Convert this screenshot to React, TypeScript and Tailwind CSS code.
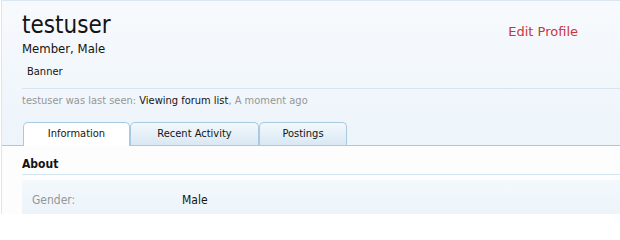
import React from "react";

export default function App() {
  const font = { fontFamily: '"DejaVu Sans Condensed", "DejaVu Sans", Tahoma, sans-serif' };
  return (
    <div className="w-[620px] h-[231px] bg-white overflow-hidden" style={font}>
      <div className="h-[214px] ml-[1px] border-l border-t border-[#dbe6f0] flex flex-col">
        {/* header */}
        <div className="bg-gradient-to-b from-[#f7fafd] to-[#edf4fa] flex flex-col pt-[10px]">
          <div className="flex pl-[20px] pr-[42px]">
            <div className="flex-1 flex flex-col">
              <div className="text-[24px] leading-[28px] text-[#141414]">testuser</div>
              <div className="text-[13px] leading-[16px] mt-[2px] text-[#141414]">Member, Male</div>
              <div className="text-[11px] leading-[14px] mt-[8px] ml-[5px] text-[#141414]">Banner</div>
            </div>
            <div className="text-[13px] leading-[16px] text-[#c8363a] mt-[13px] font-['DejaVu_Sans',sans-serif]">Edit Profile</div>
          </div>
          <div className="ml-[20px] mt-[9px] border-t border-[#d7e4ef]" />
          <div className="pl-[20px] pt-[5px] text-[11px] leading-[14px] text-[#969696]">
            testuser was last seen: <span className="text-[#141414]">Viewing forum list</span>, A moment ago
          </div>
          <div className="flex items-end pl-[21px] mt-[14px] border-b border-[#a9c9e0] h-[24px]">
            <div className="w-[107px] h-[24px] -mb-px rounded-t-[5px] border border-b-0 border-[#a9c9e0] bg-white flex items-center justify-center text-[11px] text-[#141414]">
              Information
            </div>
            <div className="w-[129px] h-[23px] rounded-t-[5px] border border-b-0 border-[#a9c9e0] bg-gradient-to-b from-[#f3f8fc] to-[#d9e8f4] flex items-center justify-center text-[11px] text-[#141414]">
              Recent Activity
            </div>
            <div className="w-[88px] h-[23px] rounded-t-[5px] border border-b-0 border-[#a9c9e0] bg-gradient-to-b from-[#f3f8fc] to-[#d9e8f4] flex items-center justify-center text-[11px] text-[#141414]">
              Postings
            </div>
          </div>
        </div>
        {/* content */}
        <div className="flex-1 bg-[#fdfdfe] pl-[20px] pt-[10px] flex flex-col">
          <div className="text-[12px] leading-[16px] font-semibold text-[#141414] pb-[2px] border-b border-[#d3e5ee]">About</div>
          <div className="mt-[5px] flex-1 bg-gradient-to-b from-[#f3f8fc] to-[#ecf4fa] flex items-center pl-[10px] text-[12px] pt-[5px]">
            <div className="w-[150px] text-[#969696]">Gender:</div>
            <div className="text-[#141414]">Male</div>
          </div>
        </div>
      </div>
    </div>
  );
}
